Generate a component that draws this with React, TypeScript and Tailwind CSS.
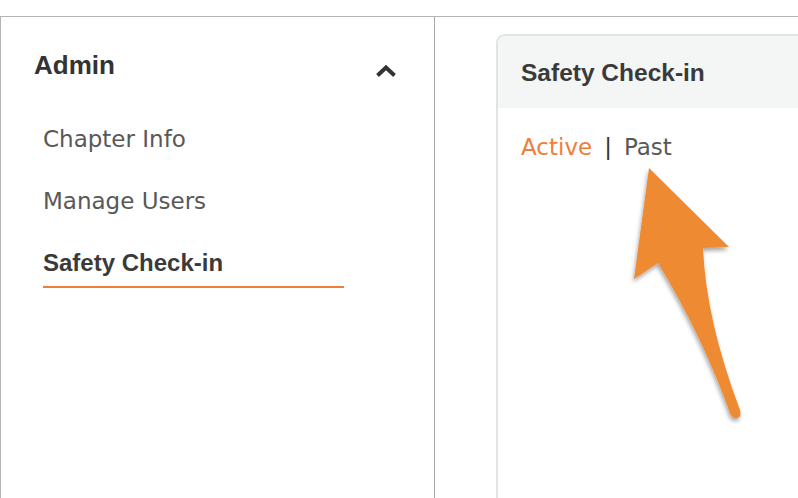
import React from "react";

const regular = { fontFamily: '"DejaVu Sans", sans-serif' };
const bold = { fontFamily: '"Liberation Sans", Arial, sans-serif' };

export default function App() {
  return (
    <div className="relative w-[798px] h-[498px] overflow-hidden bg-white">
      <div className="pt-[16px] h-full">
        <div className="flex h-full border-t border-l border-[#b4b4b4]">
          {/* Sidebar */}
          <aside className="w-[434px] shrink-0 border-r border-[#a8a8a8] pt-[33px] pl-[33px] pr-[37px]">
            <div className="flex items-start justify-between">
              <h2
                className="text-[26px] leading-[30px] font-bold text-[#333333]"
                style={bold}
              >
                Admin
              </h2>
              <svg
                width="22"
                height="14"
                viewBox="0 0 22 14"
                className="mt-[14px]"
                fill="none"
              >
                <polyline
                  points="2.5,11.5 11,3.5 19.5,11.5"
                  stroke="#333333"
                  strokeWidth="4"
                />
              </svg>
            </div>
            <nav className="mt-[45px] pl-[9px] flex flex-col gap-[34px]">
              <a
                className="text-[23px] leading-[28px] text-[#585858]"
                style={regular}
              >
                Chapter Info
              </a>
              <a
                className="text-[23px] leading-[28px] text-[#585858]"
                style={regular}
              >
                Manage Users
              </a>
              <a
                className="w-[301px] pb-[9px] border-b-2 border-[#f07d3a] text-[24px] leading-[28px] font-bold text-[#3a3a3a]"
                style={bold}
              >
                Safety Check-in
              </a>
            </nav>
          </aside>

          {/* Main */}
          <main className="flex-1 pl-[61px] pt-[17px]">
            <div className="w-[380px] h-[480px] rounded-tl-[9px] border-2 border-[#e2e4e4] overflow-hidden">
              <div className="bg-[#f4f5f5] pl-[23px] pt-[22px] pb-[20px]">
                <h3
                  className="text-[24.5px] leading-[30px] font-bold text-[#3a3a3a]"
                  style={bold}
                >
                  Safety Check-in
                </h3>
              </div>
              <div
                className="pl-[23px] pt-[25px] text-[23px] leading-[28px] flex"
                style={regular}
              >
                <span className="text-[#f07d3a]">Active</span>
                <span className="mx-[12px] text-[#333333]">|</span>
                <span className="text-[#585858]">Past</span>
              </div>
            </div>
          </main>
        </div>
      </div>

      {/* Annotation arrow */}
      <svg
        className="absolute inset-0 pointer-events-none"
        width="798"
        height="498"
        viewBox="0 0 798 498"
      >
        <defs>
          <filter id="sh" x="-20%" y="-20%" width="140%" height="140%">
            <feDropShadow dx="-1" dy="3" stdDeviation="2" floodColor="#000" floodOpacity="0.35" />
          </filter>
        </defs>
        <path
          d="M649,168 L729,247 L703,248 Q706,320 740,410 Q742,419 735,418 Q731,417 730,413 Q702,335 658,263 L634,279 Z"
          fill="#ee8a33"
          filter="url(#sh)"
        />
      </svg>
    </div>
  );
}
